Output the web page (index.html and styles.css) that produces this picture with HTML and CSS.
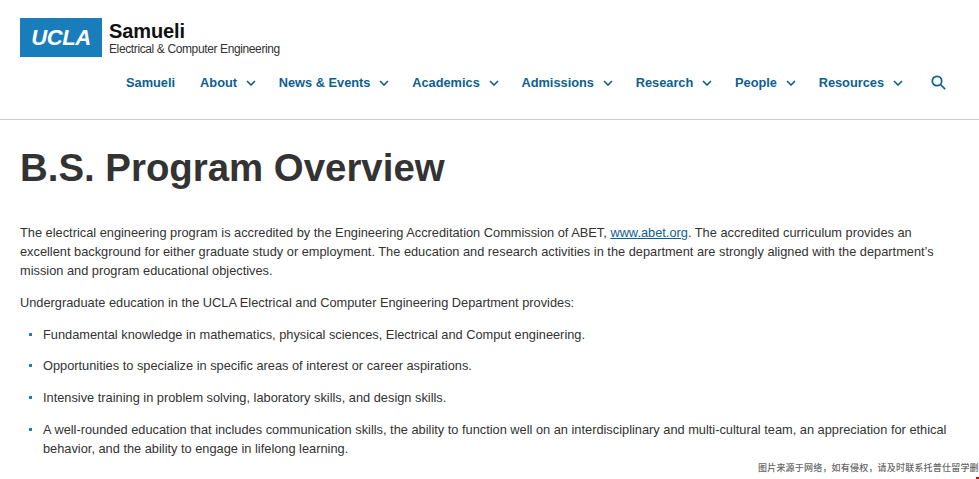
FILE: index.html

```html
<!DOCTYPE html>
<html lang="en">
<head>
  <meta charset="UTF-8" />
  <title>B.S. Program Overview</title>
  <link rel="stylesheet" href="styles.css">
</head>
<body>

  <header class="site-header">
    <div class="brand">
      <span class="brand-box">UCLA</span>
      <div class="brand-text">
        <span class="brand-name">Samueli</span>
        <span class="brand-dept">Electrical &amp; Computer Engineering</span>
      </div>
    </div>
    <nav class="nav">
      <a class="nav-item">Samueli</a>
      <a class="nav-item">About <svg class="chev" viewBox="0 0 10 6"><path d="M1 1l4 4 4-4"/></svg></a>
      <a class="nav-item">News &amp; Events <svg class="chev" viewBox="0 0 10 6"><path d="M1 1l4 4 4-4"/></svg></a>
      <a class="nav-item">Academics <svg class="chev" viewBox="0 0 10 6"><path d="M1 1l4 4 4-4"/></svg></a>
      <a class="nav-item">Admissions <svg class="chev" viewBox="0 0 10 6"><path d="M1 1l4 4 4-4"/></svg></a>
      <a class="nav-item">Research <svg class="chev" viewBox="0 0 10 6"><path d="M1 1l4 4 4-4"/></svg></a>
      <a class="nav-item">People <svg class="chev" viewBox="0 0 10 6"><path d="M1 1l4 4 4-4"/></svg></a>
      <a class="nav-item">Resources <svg class="chev" viewBox="0 0 10 6"><path d="M1 1l4 4 4-4"/></svg></a>
      <svg class="search" viewBox="0 0 15 15"><circle cx="6" cy="6" r="4.7"/><path d="M9.5 9.5l4.6 4.6"/></svg>
    </nav>
  </header>

  <main class="content">
    <h1>B.S. Program Overview</h1>
    <p>The electrical engineering program is accredited by the Engineering Accreditation Commission of ABET, <a class="link">www.abet.org</a>. The accredited curriculum provides an excellent background for either graduate study or employment. The education and research activities in the department are strongly aligned with the department’s mission and program educational objectives.</p>
    <p>Undergraduate education in the UCLA Electrical and Computer Engineering Department provides:</p>
    <ul>
      <li>Fundamental knowledge in mathematics, physical sciences, Electrical and Comput engineering.</li>
      <li>Opportunities to specialize in specific areas of interest or career aspirations.</li>
      <li>Intensive training in problem solving, laboratory skills, and design skills.</li>
      <li>A well-rounded education that includes communication skills, the ability to function well on an interdisciplinary and multi-cultural team, an appreciation for ethical behavior, and the ability to engage in lifelong learning.</li>
    </ul>
  </main>

  <div class="watermark">图片来源于网络，如有侵权，请及时联系托普仕留学删除</div>
  <div class="corner-mark"></div>

</body>
</html>
```

FILE: styles.css

```css
html, body {
  margin: 0;
  padding: 0;
  height: 479px;
  overflow: hidden;
  background: #fff;
  font-family: "Liberation Sans", Arial, sans-serif;
  color: #333;
}

.site-header {
  height: 101px;
  border-bottom: 1px solid #ccc;
  padding: 18px 0 0 20px;
}

.brand {
  display: flex;
  align-items: center;
  height: 39px;
}
.brand-box {
  width: 82px;
  height: 39px;
  background: #1a7dbb;
  color: #fff;
  font-size: 22px;
  font-weight: bold;
  font-style: italic;
  letter-spacing: -0.4px;
  display: flex;
  align-items: center;
  justify-content: center;
}
.brand-text {
  display: flex;
  flex-direction: column;
  margin: 1px 0 0 7px;
  color: #111;
}
.brand-name {
  font-size: 20px;
  line-height: 21px;
  font-weight: bold;
  letter-spacing: -0.1px;
}
.brand-dept {
  font-size: 12px;
  line-height: 14px;
  letter-spacing: -0.38px;
  color: #333;
}

.nav {
  display: flex;
  align-items: center;
  margin-top: 15px;
  padding-left: 106px;
  height: 20px;
  font-size: 12.8px;
  font-weight: bold;
  color: #0b5f94;
}
.nav-item {
  display: flex;
  align-items: center;
  margin-right: 22.7px;
  white-space: nowrap;
}
.nav-item:first-child {
  margin-right: 25px;
}
.chev {
  width: 10px;
  height: 6px;
  margin: 2px 0 0 9px;
  fill: none;
  stroke: #0b5f94;
  stroke-width: 1.6;
}
.search {
  width: 15px;
  height: 15px;
  margin-left: 5px;
  fill: none;
  stroke: #0b5f94;
  stroke-width: 1.7;
}

.content {
  padding: 0 20px;
  font-size: 12.81px;
  line-height: 19.2px;
}
h1 {
  margin: 27px 0 34px;
  font-size: 38.4px;
  line-height: 42px;
  font-weight: bold;
  color: #333;
}
p {
  margin: 0 0 12.8px;
}
.link {
  color: #0b5f94;
  text-decoration: underline;
}
ul {
  list-style: none;
  margin: -0.7px 0 0;
  padding: 0 0 0 23px;
}
li {
  position: relative;
  margin-bottom: 12.4px;
}
li::before {
  content: "";
  position: absolute;
  left: -14px;
  top: 8px;
  width: 3px;
  height: 3px;
  background: #1a7dbb;
}

.watermark {
  position: absolute;
  left: 758px;
  top: 462px;
  width: 221px;
  overflow: hidden;
  white-space: nowrap;
  font-family: "Noto Sans CJK SC", sans-serif;
  font-size: 9px;
  letter-spacing: 0.2px;
  line-height: 12px;
  font-weight: 500;
  color: #666;
}
.corner-mark {
  position: absolute;
  left: 976px;
  top: 477px;
  width: 3px;
  height: 2px;
  background: #c0141c;
}
```
